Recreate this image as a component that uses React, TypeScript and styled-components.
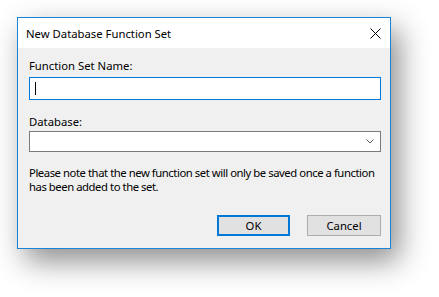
import React from "react";
import styled, { createGlobalStyle } from "styled-components";

const Global = createGlobalStyle`
  html, body { margin: 0; padding: 0; background: #ffffff; }
  body { font-family: "Noto Sans", "Open Sans", sans-serif; font-size: 11.3px; color: #000; }
`;

const Page = styled.div`
  box-sizing: border-box;
  width: 439px;
  height: 297px;
  padding: 17px 0 0 17px;
`;

const Window = styled.div`
  width: 372px;
  height: 230px;
  border: 1px solid #1883d7;
  background: #f0f0f0;
  box-shadow: 8px 12px 28px rgba(0, 0, 0, 0.45);
  display: flex;
  flex-direction: column;
`;

const TitleBar = styled.div`
  height: 30px;
  background: #ffffff;
  display: flex;
  align-items: center;
  justify-content: space-between;
  padding: 0 9px 0 8px;
`;

const Title = styled.span`
  font-size: 11.3px;
  color: #000;
  padding-top: 1px;
`;

const CloseButton = styled.span`
  width: 11px;
  height: 11px;
  display: flex;
`;

const Body = styled.div`
  flex: 1;
  display: flex;
  flex-direction: column;
  padding: 10px 9px 0 11px;
`;

const Label = styled.div<{ $top?: number }>`
  font-size: 11.3px;
  line-height: 15px;
  margin-top: ${(p) => p.$top ?? 0}px;
`;

const TextInput = styled.div`
  height: 21px;
  margin-top: 4px;
  border: 1px solid #0078d7;
  background: #fff;
  display: flex;
  align-items: center;
  padding-left: 5px;
`;

const Caret = styled.span`
  width: 1px;
  height: 13px;
  background: #000;
`;

const Combo = styled.div`
  height: 19px;
  margin-top: 2px;
  border: 1px solid #7a7a7a;
  background: #fff;
  display: flex;
  align-items: center;
  justify-content: flex-end;
  padding-right: 6px;
`;

const Note = styled.div`
  margin-top: 14px;
  font-size: 11.3px;
  line-height: 14px;
  letter-spacing: -0.45px;
  white-space: nowrap;
`;

const Buttons = styled.div`
  margin-top: auto;
  margin-bottom: 12px;
  display: flex;
  justify-content: flex-end;
  gap: 17px;
`;

const Button = styled.div<{ $primary?: boolean }>`
  box-sizing: border-box;
  width: ${(p) => (p.$primary ? 73 : 74)}px;
  height: 21px;
  background: #e1e1e1;
  border: ${(p) => (p.$primary ? "2px solid #0078d7" : "1px solid #adadad")};
  display: flex;
  align-items: center;
  justify-content: center;
  font-size: 11.3px;
`;

export default function App() {
  return (
    <>
      <Global />
      <Page>
        <Window>
          <TitleBar>
            <Title>New Database Function Set</Title>
            <CloseButton>
              <svg width="11" height="11" viewBox="0 0 11 11">
                <path d="M0.5 0.5 L10.5 10.5 M10.5 0.5 L0.5 10.5" stroke="#000" strokeWidth="1" fill="none" />
              </svg>
            </CloseButton>
          </TitleBar>
          <Body>
            <Label>Function Set Name:</Label>
            <TextInput>
              <Caret />
            </TextInput>
            <Label $top={14}>Database:</Label>
            <Combo>
              <svg width="8" height="5" viewBox="0 0 8 5">
                <path d="M0.5 0.5 L4 4 L7.5 0.5" stroke="#606060" strokeWidth="1" fill="none" />
              </svg>
            </Combo>
            <Note>
              Please note that the new function set will only be saved once a function
              <br />
              has been added to the set.
            </Note>
            <Buttons>
              <Button $primary>OK</Button>
              <Button>Cancel</Button>
            </Buttons>
          </Body>
        </Window>
      </Page>
    </>
  );
}
